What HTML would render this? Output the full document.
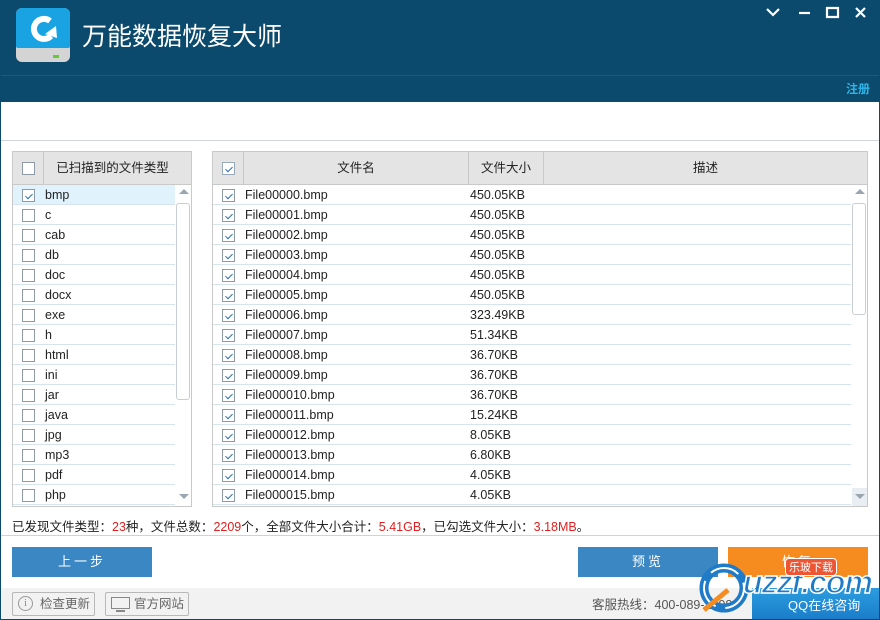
<!DOCTYPE html><html><head><meta charset="utf-8"><style>
*{margin:0;padding:0;box-sizing:border-box}
body{width:880px;height:620px;position:relative;overflow:hidden;background:#fff;font-family:"Liberation Sans","Microsoft YaHei","Noto Sans CJK SC",sans-serif;font-size:12px;color:#222}
.a{position:absolute}
.cb{position:absolute;width:13px;height:13px;border:1px solid #8e9aa5;background:#fff}
.cb.on::after{content:"";position:absolute;left:3.5px;top:1.5px;width:3px;height:6px;border:solid #2a6fb0;border-width:0 1.6px 1.6px 0;transform:rotate(45deg)}
.row{position:absolute;height:20px;border-bottom:1px solid #d6e4ef;font-size:12.5px;line-height:21px}
.hd{position:absolute;background:#e4e4e4;border:1px solid #c9c9c9;height:34px;line-height:32px;text-align:center;font-size:12.5px}
.btn{position:absolute;height:30px;line-height:30px;text-align:center;color:#fff;font-size:13px;letter-spacing:3px}
</style></head><body>
<div class="a" style="left:0;top:0;width:880px;height:102px;background:#0b4a6d"></div>
<div class="a" style="left:0;top:75px;width:880px;height:1px;background:#1a5a7c"></div>
<div class="a" style="left:16px;top:8px;width:54px;height:54px;border-radius:6px;background:#d4d4d4"></div>
<div class="a" style="left:16px;top:8px;width:54px;height:40px;border-radius:6px 6px 2px 2px;background:#1aa3e3"></div>
<div class="a" style="left:53px;top:55px;width:6px;height:3px;background:#6c3"></div>
<svg class="a" style="left:24px;top:12px" width="38" height="34" viewBox="0 0 38 34"><path d="M26 9A10 10 0 1 0 27 24" fill="none" stroke="#fff" stroke-width="6"/><path d="M21 22l11-8 1 12z" fill="#fff"/></svg>
<div class="a" style="left:82px;top:18px;color:#fff;font-size:25px;font-family:'Noto Sans CJK SC',sans-serif;line-height:34px">万能数据恢复大师</div>
<svg class="a" style="left:764px;top:6px" width="110" height="14" viewBox="0 0 110 14" stroke="#fff" stroke-width="2.2" fill="none"><path d="M3 3l6 6 6-6"/><path d="M35 7h11"/><path d="M63 2h11v9H63z"/><path d="M92 2l9 9M101 2l-9 9"/></svg>
<div class="a" style="left:846px;top:80px;color:#2cb5e8;font-size:12px;font-weight:bold">注册</div>
<div class="a" style="left:0;top:140px;width:880px;height:1px;background:#d0d6db"></div>
<div class="a" style="left:12px;top:151px;width:180px;height:356px;border:1px solid #c9c9c9"></div>
<div class="hd" style="left:12px;top:151px;width:32px"></div>
<div class="cb" style="left:22px;top:162px"></div>
<div class="hd" style="left:43px;top:151px;width:149px;padding-right:10px">已扫描到的文件类型</div>
<div class="a" style="left:13px;top:185px;width:162px;height:20px;background:#e0f3fc"></div>
<div id="L"></div>
<div class="a" style="left:175px;top:185px;width:16px;height:321px;background:#fff"></div>
<div class="a" style="left:176px;top:203px;width:14px;height:197px;border:1px solid #c8ced4;border-radius:3px"></div>
<div class="a" style="left:179px;top:189px;width:0;height:0;border:5px solid transparent;border-bottom-color:#9aa5b0;border-top:0"></div>
<div class="a" style="left:179px;top:494px;width:0;height:0;border:5px solid transparent;border-top-color:#9aa5b0;border-bottom:0"></div>
<div class="a" style="left:212px;top:151px;width:656px;height:356px;border:1px solid #c9c9c9"></div>
<div class="hd" style="left:212px;top:151px;width:32px"></div>
<div class="cb on" style="left:222px;top:162px;border-color:#9ab"></div>
<div class="hd" style="left:243px;top:151px;width:226px">文件名</div>
<div class="hd" style="left:468px;top:151px;width:76px">文件大小</div>
<div class="hd" style="left:543px;top:151px;width:325px">描述</div>
<div id="R"></div>
<div class="a" style="left:851px;top:185px;width:16px;height:321px;background:#fff"></div>
<div class="a" style="left:852px;top:203px;width:14px;height:112px;border:1px solid #c8ced4;border-radius:3px"></div>
<div class="a" style="left:852px;top:488px;width:15px;height:18px;background:#e8eef4"></div>
<div class="a" style="left:855px;top:189px;width:0;height:0;border:5px solid transparent;border-bottom-color:#9aa5b0;border-top:0"></div>
<div class="a" style="left:855px;top:494px;width:0;height:0;border:5px solid transparent;border-top-color:#9aa5b0;border-bottom:0"></div>
<div class="a" style="left:12px;top:516px;font-size:12.5px">已发现文件类型：<span style="color:#e02020">23</span>种，文件总数：<span style="color:#e02020">2209</span>个，全部文件大小合计：<span style="color:#e02020">5.41GB</span>，已勾选文件大小：<span style="color:#e02020">3.18MB</span>。</div>
<div class="a" style="left:0;top:535px;width:880px;height:1px;background:#ccd3d9"></div>
<div class="btn" style="left:12px;top:547px;width:140px;background:#3a87c3">上一步</div>
<div class="btn" style="left:578px;top:547px;width:140px;background:#3a87c3">预览</div>
<div class="btn" style="left:728px;top:547px;width:140px;background:#f68b1f">恢复</div>
<div class="a" style="left:0;top:588px;width:880px;height:32px;background:#f2f2f2"></div>
<div class="a" style="left:12px;top:592px;width:83px;height:24px;border:1px solid #b8b8b8;border-radius:2px;color:#666;font-size:12.5px;line-height:22px;padding-left:27px">检查更新</div>
<div class="a" style="left:18px;top:596px;width:15px;height:15px;border:1px solid #999;border-radius:50%;color:#888;font-size:10px;line-height:13px;text-align:center;font-family:serif">i</div>
<div class="a" style="left:105px;top:592px;width:84px;height:24px;border:1px solid #b8b8b8;border-radius:2px;color:#666;font-size:12.5px;line-height:22px;padding-left:28px">官方网站</div>
<div class="a" style="left:111px;top:597px;width:19px;height:12px;border:1.5px solid #888"></div>
<div class="a" style="left:116px;top:610px;width:9px;height:2px;background:#888"></div>
<div class="a" style="left:592px;top:594px;color:#555;font-size:12.5px">客服热线：400-089-1998</div>
<div class="a" style="left:752px;top:588px;width:128px;height:32px;background:linear-gradient(#2c9de0,#1a7cc9)"></div>
<div class="a" style="left:788px;top:595px;color:#fff;font-size:13px">QQ在线咨询</div>
<svg class="a" style="left:694px;top:560px" width="60" height="60" viewBox="0 0 60 60"><circle cx="30" cy="28" r="20" fill="none" stroke="#1f7ac8" stroke-width="9"/><circle cx="30" cy="28" r="20" fill="none" stroke="#fff" stroke-width="2" stroke-dasharray="30 10"/><path d="M10 50L34 30" stroke="#f68b1f" stroke-width="5"/></svg>
<div class="a" style="left:743px;top:564px;font:bold italic 32px 'Liberation Sans',sans-serif;color:#1f7ac8;-webkit-text-stroke:1.5px #fff;letter-spacing:-1px">uzzf.com</div>
<div class="a" style="left:785px;top:558px;background:#e53;color:#fff;font-size:11px;padding:0 3px;border:1px solid #fff;border-radius:4px">乐玻下载</div>
<div class="a" style="left:0;top:0;width:880px;height:620px;border:1px solid #0b4a6d"></div>
<script>
var t=["bmp","c","cab","db","doc","docx","exe","h","html","ini","jar","java","jpg","mp3","pdf","php"],L="",R="";
var s=["450.05KB","450.05KB","450.05KB","450.05KB","450.05KB","450.05KB","323.49KB","51.34KB","36.70KB","36.70KB","36.70KB","15.24KB","8.05KB","6.80KB","4.05KB","4.05KB"];
for(var i=0;i<16;i++){var y=185+i*20;
L+='<div class="row" style="left:13px;top:'+y+'px;width:162px"><div class="cb'+(i==0?' on':'')+'" style="left:9px;top:4px"></div><span style="position:absolute;left:32px">'+t[i]+'</span></div>';
var n="File0000"+i;
R+='<div class="row" style="left:213px;top:'+y+'px;width:638px"><div class="cb on" style="left:9px;top:4px"></div><span style="position:absolute;left:32px">'+n+'.bmp</span><span style="position:absolute;left:257px">'+s[i]+'</span></div>';}
document.getElementById("L").innerHTML=L;document.getElementById("R").innerHTML=R;
</script>
</body></html>
